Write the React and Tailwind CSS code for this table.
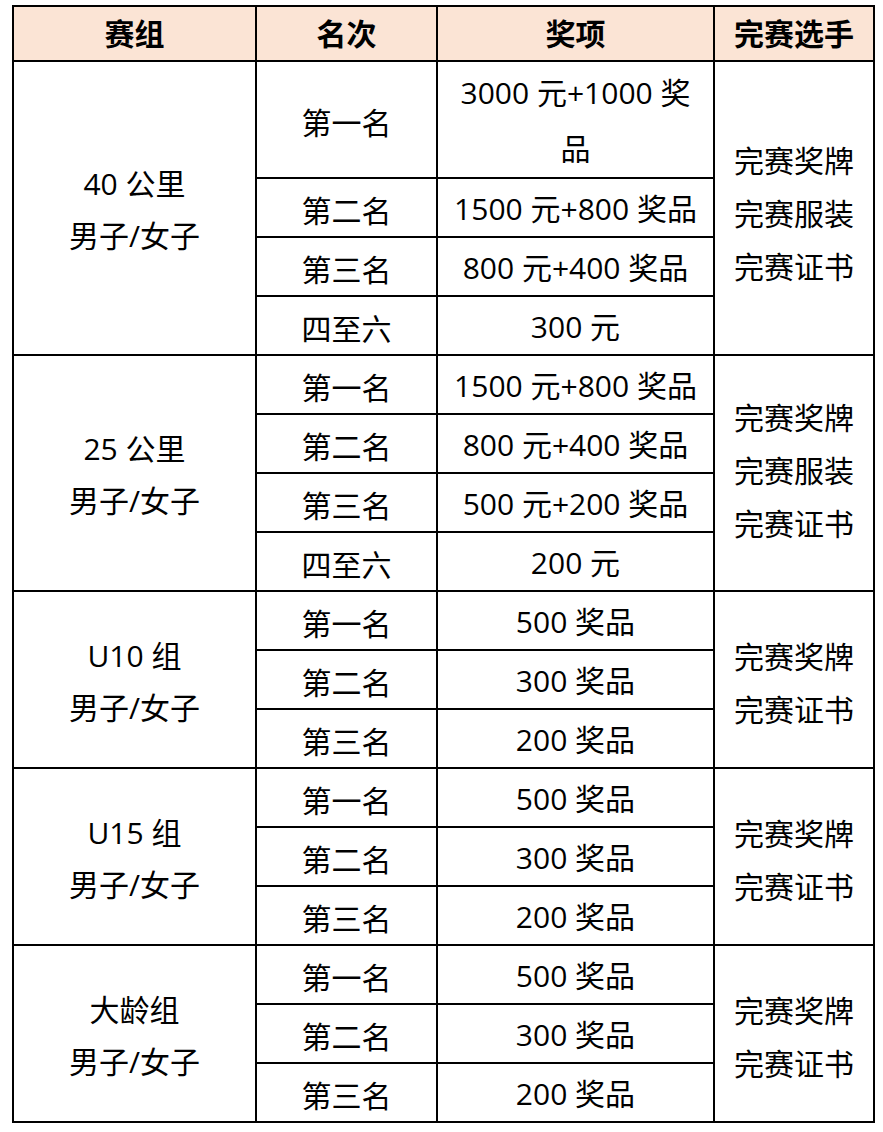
import React from "react";

const groups = [
  {
    name: "40 公里",
    pad: " pt-[10px]",
    rows: [
      ["第一名", "3000 元+1000 奖品", true],
      ["第二名", "1500 元+800 奖品"],
      ["第三名", "800 元+400 奖品"],
      ["四至六", "300 元"],
    ],
    finish: ["完赛奖牌", "完赛服装", "完赛证书"],
  },
  {
    name: "25 公里",
    pad: " pb-[6px]",
    rows: [
      ["第一名", "1500 元+800 奖品"],
      ["第二名", "800 元+400 奖品"],
      ["第三名", "500 元+200 奖品"],
      ["四至六", "200 元"],
    ],
    finish: ["完赛奖牌", "完赛服装", "完赛证书"],
  },
  {
    name: "U10 组",
    pad: " pt-[6px]",
    rows: [
      ["第一名", "500 奖品"],
      ["第二名", "300 奖品"],
      ["第三名", "200 奖品"],
    ],
    finish: ["完赛奖牌", "完赛证书"],
  },
  {
    name: "U15 组",
    pad: " pt-[6px]",
    rows: [
      ["第一名", "500 奖品"],
      ["第二名", "300 奖品"],
      ["第三名", "200 奖品"],
    ],
    finish: ["完赛奖牌", "完赛证书"],
  },
  {
    name: "大龄组",
    pad: " pt-[6px]",
    rows: [
      ["第一名", "500 奖品"],
      ["第二名", "300 奖品"],
      ["第三名", "200 奖品"],
    ],
    finish: ["完赛奖牌", "完赛证书"],
  },
];

const cell = "border-2 border-black text-center align-middle p-0";

export default function App() {
  return (
    <div
      className="w-[883px] h-[1132px] bg-white pt-[5px] pl-[12px] text-black"
      style={{ fontFamily: '"Open Sans", "Noto Sans CJK SC", sans-serif' }}
    >
      <table className="border-collapse w-[861px] table-fixed text-[30px]">
        <colgroup>
          <col className="w-[243px]" />
          <col className="w-[181px]" />
          <col className="w-[277px]" />
          <col className="w-[160px]" />
        </colgroup>
        <thead>
          <tr className="h-[55px] bg-[#fbe4d5] font-bold">
            <th className={cell}>赛组</th>
            <th className={cell}>名次</th>
            <th className={cell}>奖项</th>
            <th className={cell}>完赛选手</th>
          </tr>
        </thead>
        <tbody>
          {groups.map((g) =>
            g.rows.map((r, i) => (
              <tr key={g.name + i} className={r[2] ? "h-[117px]" : "h-[59px]"}>
                {i === 0 && (
                  <td className={cell + " leading-[52px] pt-[4px]"} rowSpan={g.rows.length}>
                    <div>{g.name}</div>
                    <div>男子/女子</div>
                  </td>
                )}
                <td className={cell + " pt-[6px]"}>{r[0]}</td>
                <td className={cell + (r[2] ? " leading-[56px] px-[12px] pt-[3px]" : " pt-[2px]")}>{r[1]}</td>
                {i === 0 && (
                  <td className={cell + " leading-[53px]" + g.pad} rowSpan={g.rows.length}>
                    {g.finish.map((f) => (
                      <div key={f}>{f}</div>
                    ))}
                  </td>
                )}
              </tr>
            ))
          )}
        </tbody>
      </table>
    </div>
  );
}
